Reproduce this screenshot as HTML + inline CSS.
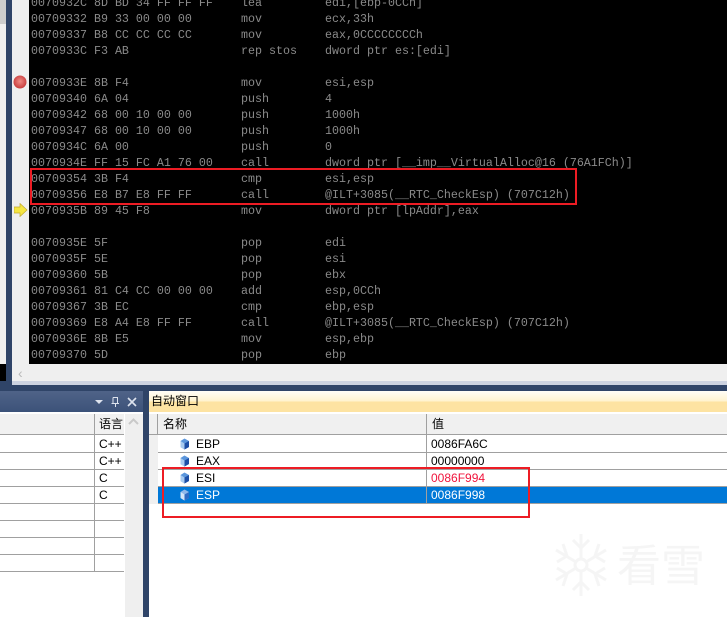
<!DOCTYPE html>
<html><head><meta charset="utf-8">
<style>
html,body{margin:0;padding:0;background:#2f4468}
#p{position:relative;width:727px;height:617px;overflow:hidden;background:#2f4468;font-family:"Liberation Sans","Noto Sans CJK SC",sans-serif;font-size:12px;color:#000}
#p div{position:absolute}
.a{white-space:pre;font-family:"Liberation Mono","Noto Sans CJK SC",monospace;font-size:11.67px;line-height:16px;color:#8a8a8a;height:16px;margin-top:1px}
.t{white-space:pre;line-height:17px;height:17px;font-size:12px;margin-top:1px}
.h{background:#a0a0a0;height:1px}
.v{background:#a0a0a0;width:1px}
</style></head><body>
<div id="p">
<div style="left:0;top:0;width:6px;height:364px;background:#f0f0f0"></div>
<div style="left:0;top:0;width:6px;height:24px;background:#cdcdcd"></div>
<div style="left:0;top:364px;width:6px;height:17px;background:#000"></div>
<div style="left:12px;top:0;width:715px;height:385px;background:#efefef"></div>
<div style="left:12px;top:381px;width:715px;height:4px;background:#ccd2e0"></div>
<div style="left:29px;top:0;width:698px;height:364px;background:#000"></div>
<div style="left:18px;top:366px;color:#b8b8b8;font-size:14px;line-height:14px">‹</div>

<div class="a" style="left:31px;top:-6px">0070932C 8D BD 34 FF FF FF</div><div class="a" style="left:241px;top:-6px">lea</div><div class="a" style="left:325px;top:-6px">edi,[ebp-0CCh]</div>
<div class="a" style="left:31px;top:10px">00709332 B9 33 00 00 00</div><div class="a" style="left:241px;top:10px">mov</div><div class="a" style="left:325px;top:10px">ecx,33h</div>
<div class="a" style="left:31px;top:26px">00709337 B8 CC CC CC CC</div><div class="a" style="left:241px;top:26px">mov</div><div class="a" style="left:325px;top:26px">eax,0CCCCCCCCh</div>
<div class="a" style="left:31px;top:42px">0070933C F3 AB</div><div class="a" style="left:241px;top:42px">rep stos</div><div class="a" style="left:325px;top:42px">dword ptr es:[edi]</div>
<div class="a" style="left:31px;top:74px">0070933E 8B F4</div><div class="a" style="left:241px;top:74px">mov</div><div class="a" style="left:325px;top:74px">esi,esp</div>
<div class="a" style="left:31px;top:90px">00709340 6A 04</div><div class="a" style="left:241px;top:90px">push</div><div class="a" style="left:325px;top:90px">4</div>
<div class="a" style="left:31px;top:106px">00709342 68 00 10 00 00</div><div class="a" style="left:241px;top:106px">push</div><div class="a" style="left:325px;top:106px">1000h</div>
<div class="a" style="left:31px;top:122px">00709347 68 00 10 00 00</div><div class="a" style="left:241px;top:122px">push</div><div class="a" style="left:325px;top:122px">1000h</div>
<div class="a" style="left:31px;top:138px">0070934C 6A 00</div><div class="a" style="left:241px;top:138px">push</div><div class="a" style="left:325px;top:138px">0</div>
<div class="a" style="left:31px;top:154px">0070934E FF 15 FC A1 76 00</div><div class="a" style="left:241px;top:154px">call</div><div class="a" style="left:325px;top:154px">dword ptr [__imp__VirtualAlloc@16 (76A1FCh)]</div>
<div class="a" style="left:31px;top:170px">00709354 3B F4</div><div class="a" style="left:241px;top:170px">cmp</div><div class="a" style="left:325px;top:170px">esi,esp</div>
<div class="a" style="left:31px;top:186px">00709356 E8 B7 E8 FF FF</div><div class="a" style="left:241px;top:186px">call</div><div class="a" style="left:325px;top:186px">@ILT+3085(__RTC_CheckEsp) (707C12h)</div>
<div class="a" style="left:31px;top:202px">0070935B 89 45 F8</div><div class="a" style="left:241px;top:202px">mov</div><div class="a" style="left:325px;top:202px">dword ptr [lpAddr],eax</div>
<div class="a" style="left:31px;top:234px">0070935E 5F</div><div class="a" style="left:241px;top:234px">pop</div><div class="a" style="left:325px;top:234px">edi</div>
<div class="a" style="left:31px;top:250px">0070935F 5E</div><div class="a" style="left:241px;top:250px">pop</div><div class="a" style="left:325px;top:250px">esi</div>
<div class="a" style="left:31px;top:266px">00709360 5B</div><div class="a" style="left:241px;top:266px">pop</div><div class="a" style="left:325px;top:266px">ebx</div>
<div class="a" style="left:31px;top:282px">00709361 81 C4 CC 00 00 00</div><div class="a" style="left:241px;top:282px">add</div><div class="a" style="left:325px;top:282px">esp,0CCh</div>
<div class="a" style="left:31px;top:298px">00709367 3B EC</div><div class="a" style="left:241px;top:298px">cmp</div><div class="a" style="left:325px;top:298px">ebp,esp</div>
<div class="a" style="left:31px;top:314px">00709369 E8 A4 E8 FF FF</div><div class="a" style="left:241px;top:314px">call</div><div class="a" style="left:325px;top:314px">@ILT+3085(__RTC_CheckEsp) (707C12h)</div>
<div class="a" style="left:31px;top:330px">0070936E 8B E5</div><div class="a" style="left:241px;top:330px">mov</div><div class="a" style="left:325px;top:330px">esp,ebp</div>
<div class="a" style="left:31px;top:346px">00709370 5D</div><div class="a" style="left:241px;top:346px">pop</div><div class="a" style="left:325px;top:346px">ebp</div>

<svg style="position:absolute;left:13px;top:75px" width="14" height="14"><defs><radialGradient id="r" cx=".5" cy=".45" r=".55"><stop offset="0" stop-color="#f08a84"/><stop offset="1" stop-color="#c83c3c"/></radialGradient></defs><circle cx="7" cy="7" r="6.5" fill="url(#r)"/></svg>
<svg style="position:absolute;left:14px;top:203px" width="14" height="14"><path d="M0 4H6V0.5L13 7L6 13.5V10H0Z" fill="#f5e642" stroke="#c2a92e" stroke-width=".7"/></svg>
<div style="left:30px;top:168px;width:543px;height:33px;border:2px solid #ed1c24;background:transparent"></div>

<!-- left panel -->
<div style="left:0;top:391px;width:143px;height:21px;background:linear-gradient(#4f6388,#3c5279)"></div>
<div style="left:0;top:412px;width:143px;height:205px;background:#fff"></div>
<div style="left:125px;top:414px;width:18px;height:203px;background:#efefef"></div>
<div style="left:0;top:414px;width:124px;height:20px;background:#f1f1f1"></div>
<div style="left:99px;top:415px;line-height:18px">语言</div>
<div class="h" style="left:0;top:434px;width:124px"></div>
<div class="h" style="left:0;top:452px;width:124px"></div>
<div class="h" style="left:0;top:469px;width:124px"></div>
<div class="h" style="left:0;top:486px;width:124px"></div>
<div class="h" style="left:0;top:503px;width:124px"></div>
<div class="h" style="left:0;top:520px;width:124px"></div>
<div class="h" style="left:0;top:537px;width:124px"></div>
<div class="h" style="left:0;top:554px;width:124px"></div>
<div class="h" style="left:0;top:571px;width:124px"></div>
<div class="v" style="left:94px;top:414px;height:158px"></div>
<div class="t" style="left:99px;top:435px">C++</div>
<div class="t" style="left:99px;top:452px">C++</div>
<div class="t" style="left:99px;top:469px">C</div>
<div class="t" style="left:99px;top:486px">C</div>
<svg style="position:absolute;left:95px;top:396px" width="45" height="14"><path d="M0 4H8L4 8Z" fill="#dde3ee"/><path d="M18 1.500H22.500V7.500M18 1.500V7.500M16.500 7.500H24M20.500 7.500V11" fill="none" stroke="#dde3ee" stroke-width="1"/><path d="M33 2L41 10M41 2L33 10" stroke="#dde3ee" stroke-width="1.600"/></svg>
<svg style="position:absolute;left:128px;top:417px" width="12" height="10"><path d="M1 7L5.500 2.500L10 7" fill="none" stroke="#c9c9c9" stroke-width="2"/></svg>

<!-- right panel -->
<div style="left:149px;top:391px;width:578px;height:226px;background:#fff"></div>
<div style="left:149px;top:391px;width:578px;height:21px;background:linear-gradient(#fffef8,#fff3cf 48%,#fde3a2 52%,#fde3a2)"></div>
<div style="left:151px;top:393px;line-height:17px;font-size:12px">自动窗口</div>
<div style="left:149px;top:414px;width:578px;height:90px;background:#f0f0f0"></div>
<div style="left:158px;top:434px;width:569px;height:70px;background:#fff"></div>
<div class="v" style="left:157px;top:414px;height:20px"></div>
<div class="h" style="left:149px;top:434px;width:9px"></div>
<div class="h" style="left:158px;top:434px;width:569px"></div>
<div class="h" style="left:158px;top:452px;width:569px"></div>
<div class="h" style="left:158px;top:469px;width:569px"></div>
<div style="left:158px;top:487px;width:569px;height:16px;background:#0078d7"></div>
<div class="h" style="left:158px;top:486px;width:569px"></div>
<div class="h" style="left:158px;top:503px;width:569px"></div>
<div class="v" style="left:426px;top:414px;height:90px"></div>
<div style="left:163px;top:415px;line-height:18px">名称</div>
<div style="left:432px;top:415px;line-height:18px">值</div>

<svg style="position:absolute;left:180px;top:438px" width="10" height="12"><path d="M4.500 .5L9 3V9L4.500 11.500L.5 9V3Z" fill="#5b96dc"/><path d="M.5 3L4.500 5.500V11.500L.5 9Z" fill="#a8cbf0"/><path d="M4.500 5.500L9 3V9L4.500 11.500Z" fill="#1c4ea6"/></svg>
<svg style="position:absolute;left:180px;top:455px" width="10" height="12"><path d="M4.500 .5L9 3V9L4.500 11.500L.5 9V3Z" fill="#5b96dc"/><path d="M.5 3L4.500 5.500V11.500L.5 9Z" fill="#a8cbf0"/><path d="M4.500 5.500L9 3V9L4.500 11.500Z" fill="#1c4ea6"/></svg>
<svg style="position:absolute;left:180px;top:472px" width="10" height="12"><path d="M4.500 .5L9 3V9L4.500 11.500L.5 9V3Z" fill="#5b96dc"/><path d="M.5 3L4.500 5.500V11.500L.5 9Z" fill="#a8cbf0"/><path d="M4.500 5.500L9 3V9L4.500 11.500Z" fill="#1c4ea6"/></svg>
<svg style="position:absolute;left:180px;top:489px" width="10" height="12"><path d="M4.500 .5L9 3V9L4.500 11.500L.5 9V3Z" fill="#8fb8ea"/><path d="M.5 3L4.500 5.500V11.500L.5 9Z" fill="#d4e6f8"/><path d="M4.500 5.500L9 3V9L4.500 11.500Z" fill="#2f6cc4"/></svg>

<div class="t" style="left:196px;top:435px">EBP</div>
<div class="t" style="left:196px;top:452px">EAX</div>
<div class="t" style="left:196px;top:469px">ESI</div>
<div class="t" style="left:196px;top:486px;color:#fff">ESP</div>
<div class="t" style="left:431px;top:435px">0086FA6C</div>
<div class="t" style="left:431px;top:452px">00000000</div>
<div class="t" style="left:431px;top:469px;color:#f0143c">0086F994</div>
<div class="t" style="left:431px;top:486px;color:#fff">0086F998</div>
<div style="left:162px;top:467px;width:364px;height:47px;border:2px solid #ed1c24"></div>

<!-- watermark -->
<svg style="position:absolute;left:553px;top:532px" width="60" height="66" fill="none" stroke="#f5f5f5" stroke-width="3"><path d="M28 2V64M3 18L53 48M53 18L3 48"/><path d="M20 8L28 16L36 8M20 58L28 50L36 58M4 30L14 24L10 12M52 36L42 42L46 54M52 30L42 24L46 12M4 36L14 42L10 54"/><circle cx="28" cy="33" r="6" fill="#fff"/></svg>
<div style="left:617px;top:537px;width:100px;font-size:44px;line-height:60px;color:#f5f5f5;white-space:nowrap">看雪</div>
</div>
</body></html>
